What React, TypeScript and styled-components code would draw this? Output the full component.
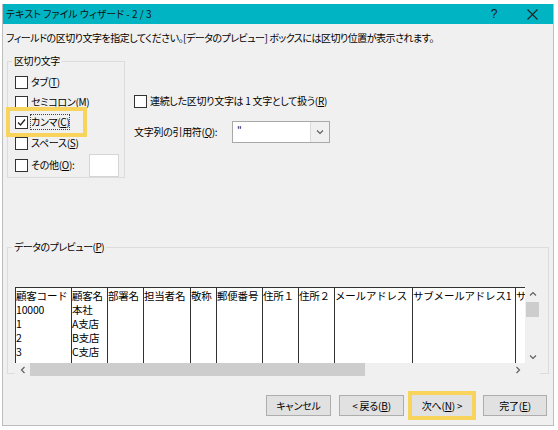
import React from "react";
import styled, { createGlobalStyle } from "styled-components";

const Global = createGlobalStyle`
  html, body { margin: 0; padding: 0; background: #ffffff; }
  body {
    font-family: "Noto Sans CJK JP", "Noto Sans", sans-serif;
    font-size: 10px;
    letter-spacing: -0.3px;
    color: #000;
    font-feature-settings: "palt" 1;
  }
`;

const Dialog = styled.div`
  margin: 4px 0 0 2px;
  width: 552px;
  height: 422px;
  box-sizing: border-box;
  border: 1px solid #bdbdbd;
  border-top: none;
  background: #f0f0f0;
  display: flex;
  flex-direction: column;
`;

const TitleBar = styled.div`
  height: 20px;
  background: #00b4c4;
  display: flex;
  align-items: center;
  padding-left: 3px;
  line-height: 14px;
  color: #111;
  letter-spacing: 0;
`;

const TitleText = styled.span`
  flex: 1;
`;

const TitleButton = styled.span<{ $w: number }>`
  width: ${(p) => p.$w}px;
  height: 20px;
  display: flex;
  align-items: center;
  justify-content: center;
  font-size: 12px;
  font-family: "Liberation Sans", sans-serif;
`;

const Instruction = styled.div`
  margin: 6px 0 0 3px;
  line-height: 16px;
  letter-spacing: -0.5px;
`;

const TopRow = styled.div`
  display: flex;
  margin-top: 8px;
`;

const Group = styled.fieldset<{ $w: number; $h: number }>`
  margin: 0 0 0 4px;
  padding: 0;
  width: ${(p) => p.$w}px;
  height: ${(p) => p.$h}px;
  box-sizing: border-box;
  border: 1px solid #dcdcdc;
  min-width: 0;
`;

const Legend = styled.legend`
  padding: 0 2px;
  margin-left: 4px;
  line-height: 14px;
  letter-spacing: -0.5px;
`;

const CheckList = styled.div`
  display: flex;
  flex-direction: column;
  gap: 6px;
  padding: 7px 5px 0 7px;
`;

const CheckRow = styled.div<{ $highlight?: boolean; $mt?: number }>`
  display: flex;
  align-items: center;
  height: 14px;
  gap: 3px;
  position: relative;
  margin-top: ${(p) => p.$mt ?? 0}px;
  ${(p) =>
    p.$highlight
      ? `
    &::before {
      content: "";
      position: absolute;
      left: -9px; top: -8px; width: 81px; height: 30px;
      box-sizing: border-box;
      border: 4px solid #f8d45c;
      pointer-events: none;
    }
  `
      : ""}
`;

const Box = styled.span`
  width: 13px;
  height: 13px;
  box-sizing: border-box;
  border: 1px solid #333;
  background: #fff;
  display: inline-flex;
  align-items: center;
  justify-content: center;
  flex: none;
`;

const Label = styled.span<{ $focus?: boolean; $w?: number }>`
  line-height: 14px;
  white-space: nowrap;
  ${(p) => (p.$w ? `width: ${p.$w}px;` : "")}
  ${(p) => (p.$focus ? "outline: 1px dotted #444; outline-offset: 0;" : "")}
`;

const U = styled.span`
  text-decoration: underline;
`;

const OtherInput = styled.span`
  width: 30px;
  height: 23px;
  box-sizing: border-box;
  border: 1px solid #d5d5d5;
  background: #fff;
  margin-left: auto;
`;

const Options = styled.div`
  display: flex;
  flex-direction: column;
  padding: 40px 0 0 9px;
`;

const QuoteRow = styled.div`
  display: flex;
  align-items: center;
  gap: 4px;
  margin-top: 13px;
`;

const Combo = styled.div`
  width: 98px;
  height: 22px;
  box-sizing: border-box;
  border: 1px solid #a8a8a8;
  background: #fff;
  display: flex;
  align-items: stretch;
`;

const ComboText = styled.span`
  flex: 1;
  padding-left: 4px;
  line-height: 16px;
`;

const ComboBtn = styled.span`
  width: 18px;
  background: #f0f0f0;
  border-left: 1px solid #dcdcdc;
  display: flex;
  align-items: center;
  justify-content: center;
`;

const PreviewGroup = styled(Group)`
  margin-top: 62px;
`;

const PreviewInner = styled.div`
  padding: 33px 0 0 7px;
  display: grid;
  grid-template-columns: 510px 15px;
  grid-template-rows: 76px 13px;
`;

const TableArea = styled.div`
  background: #fff;
  border-top: 1px solid #333;
  border-left: 1px solid #333;
  display: flex;
  overflow: hidden;
  font-size: 10.5px;
  line-height: 14px;
  font-feature-settings: normal;
  letter-spacing: -0.2px;
`;

const Col = styled.div<{ $w: number }>`
  width: ${(p) => p.$w}px;
  flex: none;
  border-right: 1px solid #333;
  box-sizing: border-box;
  white-space: nowrap;
  overflow: hidden;
  padding-top: 1px;
`;

const Cell = styled.div`
  height: 14px;
`;

const VScroll = styled.div`
  background: #f0f0f0;
  display: flex;
  flex-direction: column;
  align-items: center;
`;

const HScroll = styled.div`
  background: #f0f0f0;
  display: flex;
  align-items: center;
`;

const Arrow = styled.span`
  width: 15px;
  display: flex;
  justify-content: center;
  flex: none;
`;

const HThumb = styled.div`
  height: 13px;
  width: 335px;
  background: #cdcdcd;
`;

const Spacer = styled.div`
  flex: 1;
`;

const VThumb = styled.div`
  width: 13px;
  height: 15px;
  background: #cdcdcd;
  margin-top: 2px;
`;

const VArrow = styled.div`
  height: 13px;
  display: flex;
  align-items: center;
  justify-content: center;
`;

const Corner = styled.div`
  background: #f0f0f0;
`;

const ButtonRow = styled.div`
  display: flex;
  align-items: center;
  padding-left: 263px;
  margin-top: 21px;
`;

const Button = styled.button<{ $w: number; $gap: number; $hl?: boolean }>`
  width: ${(p) => p.$w}px;
  margin-left: ${(p) => p.$gap}px;
  height: 21px;
  box-sizing: border-box;
  border: 1px solid ${(p) => (p.$hl ? "#e1e1e1" : "#adadad")};
  background: #e1e1e1;
  font-family: "Noto Sans CJK JP", "Noto Sans", sans-serif;
  font-feature-settings: "palt" 1;
  font-size: 10px;
  letter-spacing: -0.2px;
  line-height: 14px;
  padding: 0;
  color: #000;
  ${(p) => (p.$hl ? "outline: 4px solid #f8d45c; outline-offset: 0;" : "")}
`;

const Chev = ({ d }: { d: string }) => (
  <svg width="8" height="8" viewBox="0 0 8 8">
    <path d={d} fill="none" stroke="#606060" strokeWidth="1.2" />
  </svg>
);

const columns: { w: number; cells: string[] }[] = [
  { w: 56, cells: ["顧客コード", "10000", "1", "2", "3"] },
  { w: 36, cells: ["顧客名", "本社", "A支店", "B支店", "C支店"] },
  { w: 36, cells: ["部署名"] },
  { w: 47, cells: ["担当者名"] },
  { w: 26, cells: ["敬称"] },
  { w: 46, cells: ["郵便番号"] },
  { w: 36, cells: ["住所１"] },
  { w: 36, cells: ["住所２"] },
  { w: 78, cells: ["メールアドレス"] },
  { w: 103, cells: ["サブメールアドレス1"] },
  { w: 10, cells: ["サ"] },
];

const delims = [
  { t: "タブ", k: "T", c: false },
  { t: "セミコロン", k: "M", c: false },
  { t: "カンマ", k: "C", c: true },
  { t: "スペース", k: "S", c: false },
];

export default function App() {
  return (
    <>
      <Global />
      <Dialog>
        <TitleBar>
          <TitleText>テキスト ファイル ウィザード - 2 / 3</TitleText>
          <TitleButton $w={34}>?</TitleButton>
          <TitleButton $w={42}>
            <svg width="11" height="11" viewBox="0 0 11 11">
              <path d="M0.5 0.5 L10.5 10.5 M10.5 0.5 L0.5 10.5" stroke="#222" strokeWidth="1.1" />
            </svg>
          </TitleButton>
        </TitleBar>
        <Instruction>
          フィールドの区切り文字を指定してください。[データのプレビュー] ボックスには区切り位置が表示されます。
        </Instruction>
        <TopRow>
          <Group $w={118} $h={124}>
            <Legend>区切り文字</Legend>
            <CheckList>
              {delims.map((d, i) => (
                <CheckRow key={d.k} $highlight={d.c} $mt={i === 3 ? 1 : 0}>
                  <Box>
                    {d.c && (
                      <svg width="9" height="9" viewBox="0 0 9 9">
                        <path d="M1 4.5 L3.5 7 L8 1.5" fill="none" stroke="#222" strokeWidth="1.3" />
                      </svg>
                    )}
                  </Box>
                  <Label $focus={d.c}>
                    {d.t}(<U>{d.k}</U>)
                  </Label>
                </CheckRow>
              ))}
              <CheckRow $mt={2}>
                <Box />
                <Label>
                  その他(<U>O</U>):
                </Label>
                <OtherInput />
              </CheckRow>
            </CheckList>
          </Group>
          <Options>
            <CheckRow>
              <Box />
              <Label>
                連続した区切り文字は 1 文字として扱う(<U>R</U>)
              </Label>
            </CheckRow>
            <QuoteRow>
              <Label $w={94}>
                文字列の引用符(<U>Q</U>):
              </Label>
              <Combo>
                <ComboText>"</ComboText>
                <ComboBtn>
                  <Chev d="M1 2.5 L4 5.5 L7 2.5" />
                </ComboBtn>
              </Combo>
            </QuoteRow>
          </Options>
        </TopRow>
        <PreviewGroup $w={542} $h={134}>
          <Legend>
            データのプレビュー(<U>P</U>)
          </Legend>
          <PreviewInner>
            <TableArea>
              {columns.map((c, i) => (
                <Col key={i} $w={c.w}>
                  {c.cells.map((s, j) => (
                    <Cell key={j}>{s}</Cell>
                  ))}
                </Col>
              ))}
            </TableArea>
            <VScroll>
              <VArrow>
                <Chev d="M1 5.5 L4 2.5 L7 5.5" />
              </VArrow>
              <VThumb />
              <Spacer />
              <VArrow>
                <Chev d="M1 2.5 L4 5.5 L7 2.5" />
              </VArrow>
            </VScroll>
            <HScroll>
              <Arrow>
                <Chev d="M5.5 1 L2.5 4 L5.5 7" />
              </Arrow>
              <HThumb />
              <Spacer />
              <Arrow>
                <Chev d="M2.5 1 L5.5 4 L2.5 7" />
              </Arrow>
            </HScroll>
            <Corner />
          </PreviewInner>
        </PreviewGroup>
        <ButtonRow>
          <Button $w={65} $gap={0}>キャンセル</Button>
          <Button $w={65} $gap={8}>
            &lt; 戻る(<U>B</U>)
          </Button>
          <Button $w={60} $gap={8} $hl>
            次へ(<U>N</U>) &gt;
          </Button>
          <Button $w={64} $gap={11}>
            完了(<U>E</U>)
          </Button>
        </ButtonRow>
      </Dialog>
    </>
  );
}
